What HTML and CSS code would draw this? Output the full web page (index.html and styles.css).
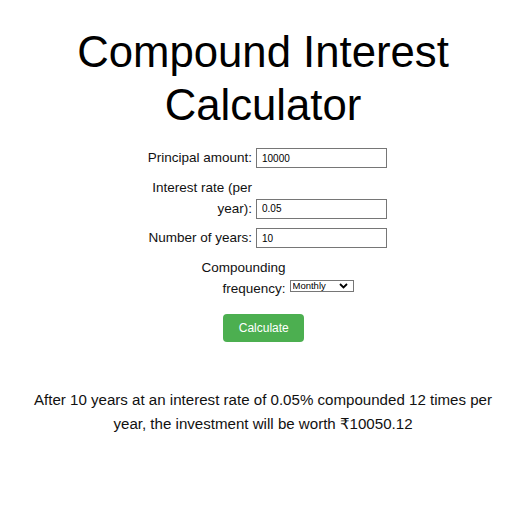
FILE: index.html
```html
<!DOCTYPE html>
<html>
<head>
<meta charset="utf-8">
<link rel="stylesheet" href="styles.css">
</head>
<body>
<h1 class="title">Compound Interest Calculator</h1>
<form class="calc">
  <div class="row">
    <label class="lbl" for="p">Principal amount:</label>
    <input class="field" id="p" type="text" value="10000">
  </div>
  <div class="row">
    <label class="lbl" for="r">Interest rate (per year):</label>
    <input class="field" id="r" type="text" value="0.05">
  </div>
  <div class="row">
    <label class="lbl" for="n">Number of years:</label>
    <input class="field" id="n" type="text" value="10">
  </div>
  <div class="row">
    <label class="lbl" for="f">Compounding frequency:</label>
    <span class="select-wrap">
      <select class="freq" id="f">
        <option>Monthly</option>
      </select>
      <svg class="chev" width="9" height="6" viewBox="0 0 9 6" aria-hidden="true"><path d="M1 1 L4.5 4.5 L8 1" fill="none" stroke="#000" stroke-width="1.8"/></svg>
    </span>
  </div>
  <div class="actions">
    <button class="btn" type="button">Calculate</button>
  </div>
</form>
<p class="result">After 10 years at an interest rate of 0.05% compounded 12 times per year, the investment will be worth ₹10050.12</p>
</body>
</html>
```
FILE: styles.css
```css
html, body {
  margin: 0;
  background: #ffffff;
}
body {
  padding: 0 7px 0 10px;
  font-family: "Liberation Sans", Arial, "DejaVu Sans", sans-serif;
  color: #000;
}
.title {
  margin: 25px 0 0;
  font-size: 43.7px;
  line-height: 53px;
  font-weight: normal;
  text-align: center;
}
.calc {
  margin-top: 16px;
  display: flex;
  flex-direction: column;
  gap: 8.5px;
}
.row {
  display: flex;
  justify-content: center;
  align-items: flex-end;
  gap: 4px;
}
.lbl {
  width: 113px;
  text-align: right;
  font-size: 13.5px;
  line-height: 21px;
  color: #111;
}
.field {
  box-sizing: border-box;
  width: 131px;
  height: 20px;
  margin: 0;
  padding: 0 4px 0 5px;
  border: 1px solid #767676;
  border-radius: 0;
  font-family: "Liberation Sans", Arial, sans-serif;
  font-size: 10px;
  color: #000;
  background: #fff;
}
.select-wrap {
  position: relative;
  display: block;
  width: 64px;
  height: 12px;
  margin: 0 0 7px;
}
.freq {
  -webkit-appearance: none;
  appearance: none;
  box-sizing: border-box;
  display: block;
  width: 64px;
  height: 12px;
  margin: 0;
  padding: 0 0 0 2px;
  border: 1px solid #767676;
  border-radius: 0;
  font-family: "Liberation Sans", Arial, sans-serif;
  font-size: 9.5px;
  line-height: 10px;
  color: #000;
  background: #fff;
}
.chev {
  position: absolute;
  right: 6px;
  top: 3px;
  pointer-events: none;
}
.actions {
  display: flex;
  justify-content: center;
  margin-top: 7px;
}
.btn {
  box-sizing: border-box;
  width: 81px;
  height: 28px;
  margin-left: 1.5px;
  padding: 0;
  border: none;
  border-radius: 4px;
  background: #4caf50;
  color: #fff;
  font-family: "Liberation Sans", Arial, sans-serif;
  font-size: 12px;
}
.result {
  margin: 46px 0 0;
  padding: 0 10px;
  font-size: 15.1px;
  line-height: 24px;
  text-align: center;
  color: #111;
}
```
